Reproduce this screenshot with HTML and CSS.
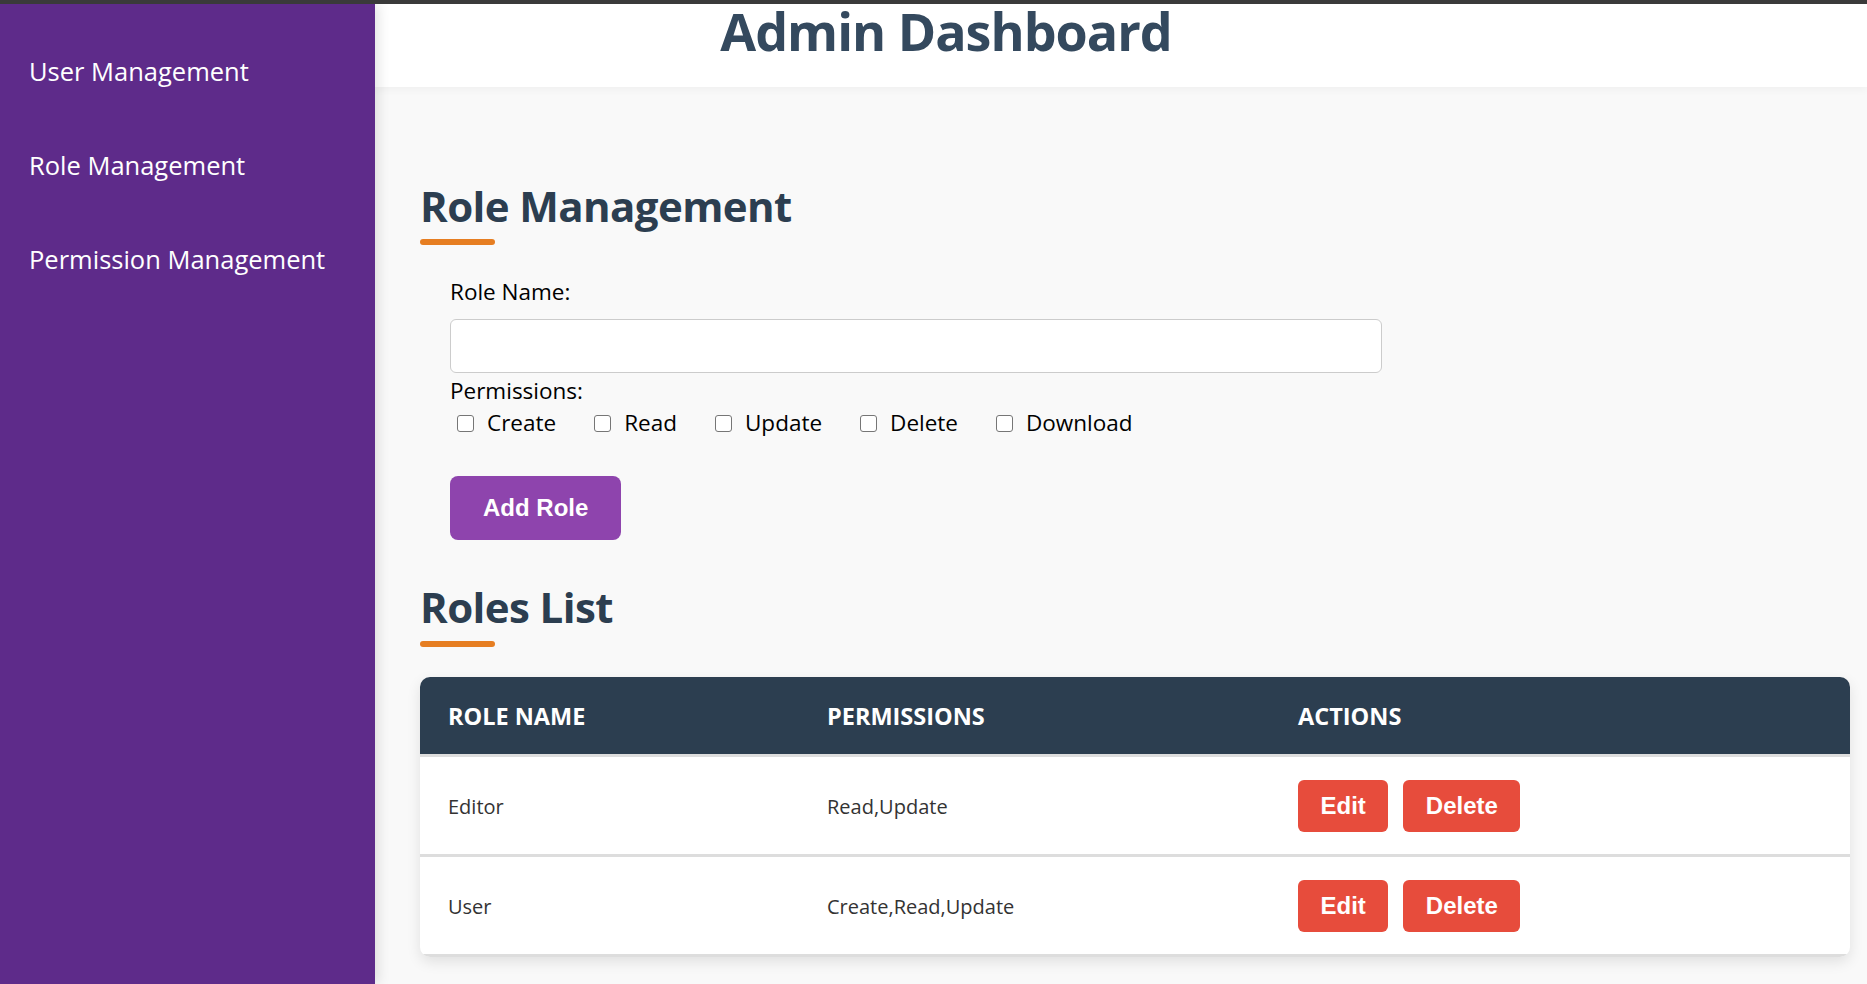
FILE: index.html
```html
<!DOCTYPE html>
<html lang="en">
<head>
<meta charset="utf-8">
<title>Admin Dashboard</title>
<link rel="stylesheet" href="styles.css">
</head>
<body>
<div class="app">
  <aside class="sidebar">
    <ul class="nav">
      <li>User Management</li>
      <li>Role Management</li>
      <li>Permission Management</li>
    </ul>
  </aside>
  <main class="main">
    <header class="header">
      <h1 class="title">Admin Dashboard</h1>
    </header>
    <section class="content">
      <h2 class="section-title">Role Management</h2>
      <form class="role-form">
        <label class="field-label">Role Name:</label>
        <input class="text-input" type="text">
        <div class="field-label perm-title">Permissions:</div>
        <div class="perm-row">
          <label class="perm"><input type="checkbox" class="check"><span>Create</span></label>
          <label class="perm"><input type="checkbox" class="check"><span>Read</span></label>
          <label class="perm"><input type="checkbox" class="check"><span>Update</span></label>
          <label class="perm"><input type="checkbox" class="check"><span>Delete</span></label>
          <label class="perm"><input type="checkbox" class="check"><span>Download</span></label>
        </div>
        <button type="button" class="btn-add">Add Role</button>
      </form>
      <h2 class="section-title list-title">Roles List</h2>
      <div class="table-card">
        <table class="roles">
          <thead>
            <tr>
              <th class="c1">ROLE NAME</th>
              <th class="c2">PERMISSIONS</th>
              <th class="c3">ACTIONS</th>
            </tr>
          </thead>
          <tbody>
            <tr>
              <td>Editor</td>
              <td>Read,Update</td>
              <td><div class="actions"><button type="button" class="btn-red">Edit</button><button type="button" class="btn-red">Delete</button></div></td>
            </tr>
            <tr>
              <td>User</td>
              <td>Create,Read,Update</td>
              <td><div class="actions"><button type="button" class="btn-red">Edit</button><button type="button" class="btn-red">Delete</button></div></td>
            </tr>
          </tbody>
        </table>
      </div>
    </section>
  </main>
</div>
</body>
</html>
```
FILE: styles.css
```css
* { box-sizing: border-box; }
html, body { margin: 0; padding: 0; }
body {
  font-family: "Open Sans", "Noto Sans", sans-serif;
  border-top: 4px solid #3a3a3a;
  background: #f9f9f9;
  overflow: hidden;
}
.app { display: flex; height: 980px; }
.sidebar {
  width: 375px;
  flex: 0 0 375px;
  background: #5e2b8a;
  position: relative;
  z-index: 2;
  box-shadow: 3px 0 12px rgba(0,0,0,0.12);
}
.nav { list-style: none; margin: 0; padding: 20px 0 0; }
.nav li {
  color: #fff;
  font-size: 25.5px;
  line-height: 30px;
  padding: 32px 0 32px 29px;
}
.main { flex: 1; display: flex; flex-direction: column; background: #f9f9f9; }
.header {
  height: 83px;
  background: #fff;
  padding: 2px 350px 0 0;
  text-align: center;
  box-shadow: 0 3px 8px rgba(0,0,0,0.04);
  position: relative;
  z-index: 1;
}
.title {
  margin: 0;
  font-size: 52px;
  line-height: 50px;
  letter-spacing: -1px;
  font-weight: 700;
  color: #34495e;
}
.content { padding: 0 17px 0 45px; }
.section-title {
  margin: 92.7px 0 0;
  font-size: 42px;
  line-height: 52px;
  letter-spacing: -0.6px;
  font-weight: 700;
  color: #2c3e50;
}
.section-title::after {
  content: "";
  display: block;
  width: 75px;
  height: 6px;
  border-radius: 3px;
  background: #e67e22;
  margin-top: 7.3px;
}
.list-title { margin-top: 40.7px; }
.list-title::after { margin-top: 8.3px; }
.role-form { margin: 33.3px 0 0 30px; display: flex; flex-direction: column; align-items: flex-start; }
.field-label { display: block; font-size: 22.5px; line-height: 28px; color: #000; }
.text-input {
  margin-top: 12.7px;
  width: 932px;
  height: 54px;
  border: 1px solid #ccc;
  border-radius: 6px;
  background: #fff;
  font-size: 20px;
  padding: 0 12px;
}
.perm-title { margin-top: 4.3px; }
.perm-row { display: flex; margin-top: 4px; height: 28px; align-items: center; }
.perm { display: flex; align-items: center; font-size: 22.5px; line-height: 28px; margin-right: 31px; color: #000; }
.check {
  appearance: none;
  -webkit-appearance: none;
  width: 17px;
  height: 17px;
  margin: 0 13px 0 7px;
  border: 1.5px solid #767676;
  border-radius: 3px;
  background: #fff;
}
.btn-add {
  margin-top: 38.7px;
  height: 64px;
  padding: 0 33px;
  border: none;
  border-radius: 8px;
  background: #8e44ad;
  color: #fff;
  font-family: "Liberation Sans", Arial, sans-serif;
  font-weight: 700;
  font-size: 24px;
}
.table-card {
  margin-top: 30px;
  border-radius: 10px;
  overflow: hidden;
  background: #fff;
  box-shadow: 0 5px 14px rgba(0,0,0,0.1);
}
.roles { width: 100%; border-collapse: separate; border-spacing: 0; }
.roles th {
  height: 80px;
  background: #2c3e50;
  color: #fff;
  font-size: 23.5px;
  font-weight: 700;
  text-align: left;
  padding: 2px 0 0 28px;
  border-bottom: 3px solid #ddd;
  vertical-align: middle;
}
.c1 { width: 379px; }
.c2 { width: 471px; }
.roles td {
  height: 100px;
  font-size: 20px;
  color: #333;
  padding: 2px 0 0 28px;
  border-bottom: 3px solid #ddd;
  vertical-align: middle;
}
.actions { display: flex; gap: 15px; }
.btn-red {
  height: 52px;
  padding: 0 22.5px;
  border: none;
  border-radius: 6px;
  background: #e74c3c;
  color: #fff;
  font-family: "Liberation Sans", Arial, sans-serif;
  font-weight: 700;
  font-size: 24px;
}
```
